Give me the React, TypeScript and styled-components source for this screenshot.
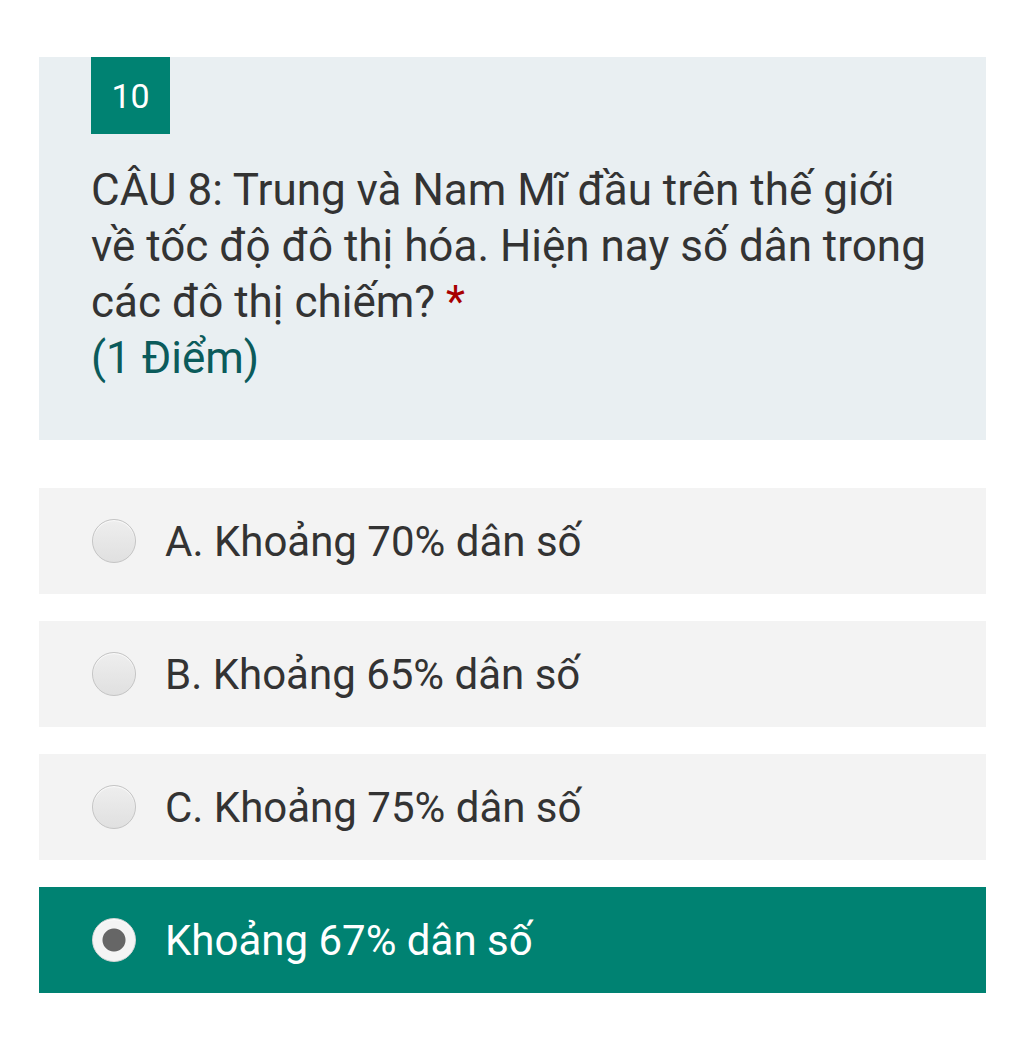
import React from "react";
import styled, { createGlobalStyle } from "styled-components";

const Global = createGlobalStyle`
  html, body { margin: 0; padding: 0; background: #ffffff; }
  body { font-family: Roboto, "Noto Sans", "Liberation Sans", sans-serif; }
`;

const Page = styled.div`
  padding: 57px 38px 40px 39px;
  display: flex;
  flex-direction: column;
`;

const QuestionCard = styled.div`
  background: #e9eff2;
  padding: 0 45px 54px 52px;
  display: flex;
  flex-direction: column;
`;

const Badge = styled.div`
  width: 79px;
  height: 77px;
  background: #008272;
  color: #ffffff;
  font-size: 34px;
  display: flex;
  align-items: center;
  justify-content: center;
  margin-bottom: 28px;
`;

const QuestionText = styled.div`
  font-size: 44px;
  line-height: 56px;
  color: #333333;
`;

const Required = styled.span`
  color: #a80000;
`;

const Points = styled.div`
  color: #0b5b5b;
  font-size: 44px;
`;

const Options = styled.div`
  margin-top: 48px;
  display: flex;
  flex-direction: column;
  gap: 27px;
`;

const Option = styled.div<{ $selected?: boolean }>`
  height: 106px;
  display: flex;
  align-items: center;
  padding-left: 53px;
  background: ${(p) => (p.$selected ? "#008272" : "#f3f3f3")};
  color: ${(p) => (p.$selected ? "#ffffff" : "#333333")};
  font-size: 42px;
`;

const Radio = styled.span<{ $selected?: boolean }>`
  box-sizing: border-box;
  width: 44px;
  height: 44px;
  border-radius: 50%;
  flex: none;
  margin-right: 29px;
  border: 1.5px solid ${(p) => (p.$selected ? "#d8d8d8" : "#c4c4c4")};
  background: ${(p) =>
    p.$selected
      ? "radial-gradient(circle, #666666 0 11px, #f4f4f4 12px)"
      : "linear-gradient(#eeeeee, #e0e0e0)"};
  box-shadow: inset 0 1px 1px rgba(255, 255, 255, 0.8);
`;

const options = [
  { label: "A. Khoảng 70% dân số" },
  { label: "B. Khoảng 65% dân số" },
  { label: "C. Khoảng 75% dân số" },
  { label: "Khoảng 67% dân số", selected: true },
];

export default function App() {
  return (
    <>
      <Global />
      <Page>
        <QuestionCard>
          <Badge>10</Badge>
          <QuestionText>
            CÂU 8: Trung và Nam Mĩ đầu trên thế giới về tốc độ đô thị hóa. Hiện nay số dân trong các đô thị chiếm?{" "}
            <Required>*</Required>
            <Points>(1 Điểm)</Points>
          </QuestionText>
        </QuestionCard>
        <Options>
          {options.map((o) => (
            <Option key={o.label} $selected={o.selected}>
              <Radio $selected={o.selected} />
              {o.label}
            </Option>
          ))}
        </Options>
      </Page>
    </>
  );
}
